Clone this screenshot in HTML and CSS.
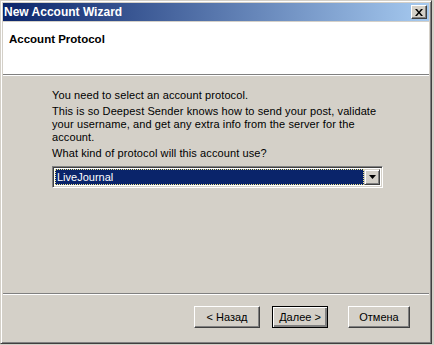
FILE: index.html
```html
<!DOCTYPE html>
<html lang="en">
<head>
    <meta charset="UTF-8">
    <title>New Account Wizard</title>
    <link rel="stylesheet" href="styles.css">
</head>
<body>

<div class="window">
    <div class="titlebar">
        <span class="title">New Account Wizard</span>
        <button class="close-btn" type="button">
            <svg width="8" height="7" viewBox="0 0 8 7">
                <path d="M0 0h2l2 2.5 2-2.5h2l-3 3.5 3 3.5h-2l-2-2.5-2 2.5h-2l3-3.5z" fill="#000"/>
            </svg>
        </button>
    </div>

    <div class="header">
        <h2>Account Protocol</h2>
    </div>

    <div class="content">
        <p>You need to select an account protocol.</p>
        <p>This is so Deepest Sender knows how to send your post, validate your username, and get any extra info from the server for the account.</p>
        <p>What kind of protocol will this account use?</p>
        <div class="combo">
            <div class="combo-value"><span>LiveJournal</span></div>
            <div class="combo-arrow">
                <svg width="7" height="4" viewBox="0 0 7 4"><path d="M0 0h7l-3.5 4z" fill="#000"/></svg>
            </div>
        </div>
    </div>

    <div class="footer">
        <button type="button" class="btn btn-back">&lt; Назад</button>
        <button type="button" class="btn btn-next">Далее &gt;</button>
        <button type="button" class="btn btn-cancel">Отмена</button>
    </div>
</div>

</body>
</html>
```

FILE: styles.css
```css
body {
    margin: 0;
    background-color: #d4d0c8;
    font-family: "Liberation Sans", Arial, sans-serif;
    font-size: 11px;
    color: #000;
}

.window {
    width: 432px;
    height: 344px;
    box-sizing: border-box;
    background-color: #d4d0c8;
    border: 1px solid;
    border-color: #d4d0c8 #404040 #404040 #d4d0c8;
    box-shadow: inset 1px 1px #fff, inset -1px -1px #808080;
    padding: 2px;
    display: flex;
    flex-direction: column;
}

.titlebar {
    height: 18px;
    background: linear-gradient(to right, #0a246a, #a6caf0);
    display: flex;
    align-items: center;
    justify-content: space-between;
    padding: 0 2px 0 1px;
    flex-shrink: 0;
}

.title {
    color: #fff;
    font-weight: bold;
    font-size: 12px;
}

.close-btn {
    width: 16px;
    height: 14px;
    padding: 0;
    margin: 0;
    background-color: #d4d0c8;
    border: 1px solid;
    border-color: #fff #404040 #404040 #fff;
    box-shadow: inset -1px -1px #808080;
    display: flex;
    align-items: center;
    justify-content: center;
}

.header {
    margin-top: 1px;
    height: 52px;
    background-color: #fff;
    border-bottom: 1px solid #808080;
    box-shadow: 0 1px #fff;
    flex-shrink: 0;
}

.header h2 {
    margin: 0;
    padding: 11px 0 0 6px;
    font-size: 11.5px;
    font-weight: bold;
}

.content {
    margin-top: 1px;
    padding: 13px 46px 0 49px;
    height: 204px;
    border-bottom: 1px solid #808080;
    box-shadow: 0 1px #fff;
    letter-spacing: 0.1px;
}

.content p {
    margin: 0 0 3px 0;
    line-height: 13px;
}

.combo {
    margin-top: 6px;
    width: 331px;
    height: 22px;
    box-sizing: border-box;
    display: flex;
    background-color: #fff;
    border: 1px solid;
    border-color: #808080 #fff #fff #808080;
    box-shadow: inset 1px 1px #404040, inset -1px -1px #d4d0c8;
    padding: 2px;
    letter-spacing: 0;
}

.combo-value {
    flex: 1;
    background-color: #0a246a;
    color: #fff;
    border: 1px dotted #f0e68c;
    display: flex;
    align-items: center;
    padding-left: 1px;
}

.combo-arrow {
    width: 16px;
    box-sizing: border-box;
    background-color: #d4d0c8;
    border: 1px solid;
    border-color: #d4d0c8 #404040 #404040 #d4d0c8;
    box-shadow: inset 1px 1px #fff, inset -1px -1px #808080;
    display: flex;
    align-items: center;
    justify-content: center;
}

.footer {
    display: flex;
    padding: 12px 0 0 191px;
}

.btn {
    height: 22px;
    box-sizing: border-box;
    font-family: "Liberation Sans", Arial, sans-serif;
    font-size: 11px;
    color: #000;
    background-color: #d4d0c8;
    border: 1px solid;
    border-color: #fff #404040 #404040 #fff;
    box-shadow: inset -1px -1px #808080;
    padding: 0;
}

.btn-back {
    width: 66px;
}

.btn-next {
    width: 56px;
    margin-left: 12px;
    border-color: #000;
    box-shadow: inset 1px 1px #fff, inset -2px -2px #808080;
}

.btn-cancel {
    width: 62px;
    margin-left: 20px;
}
```
